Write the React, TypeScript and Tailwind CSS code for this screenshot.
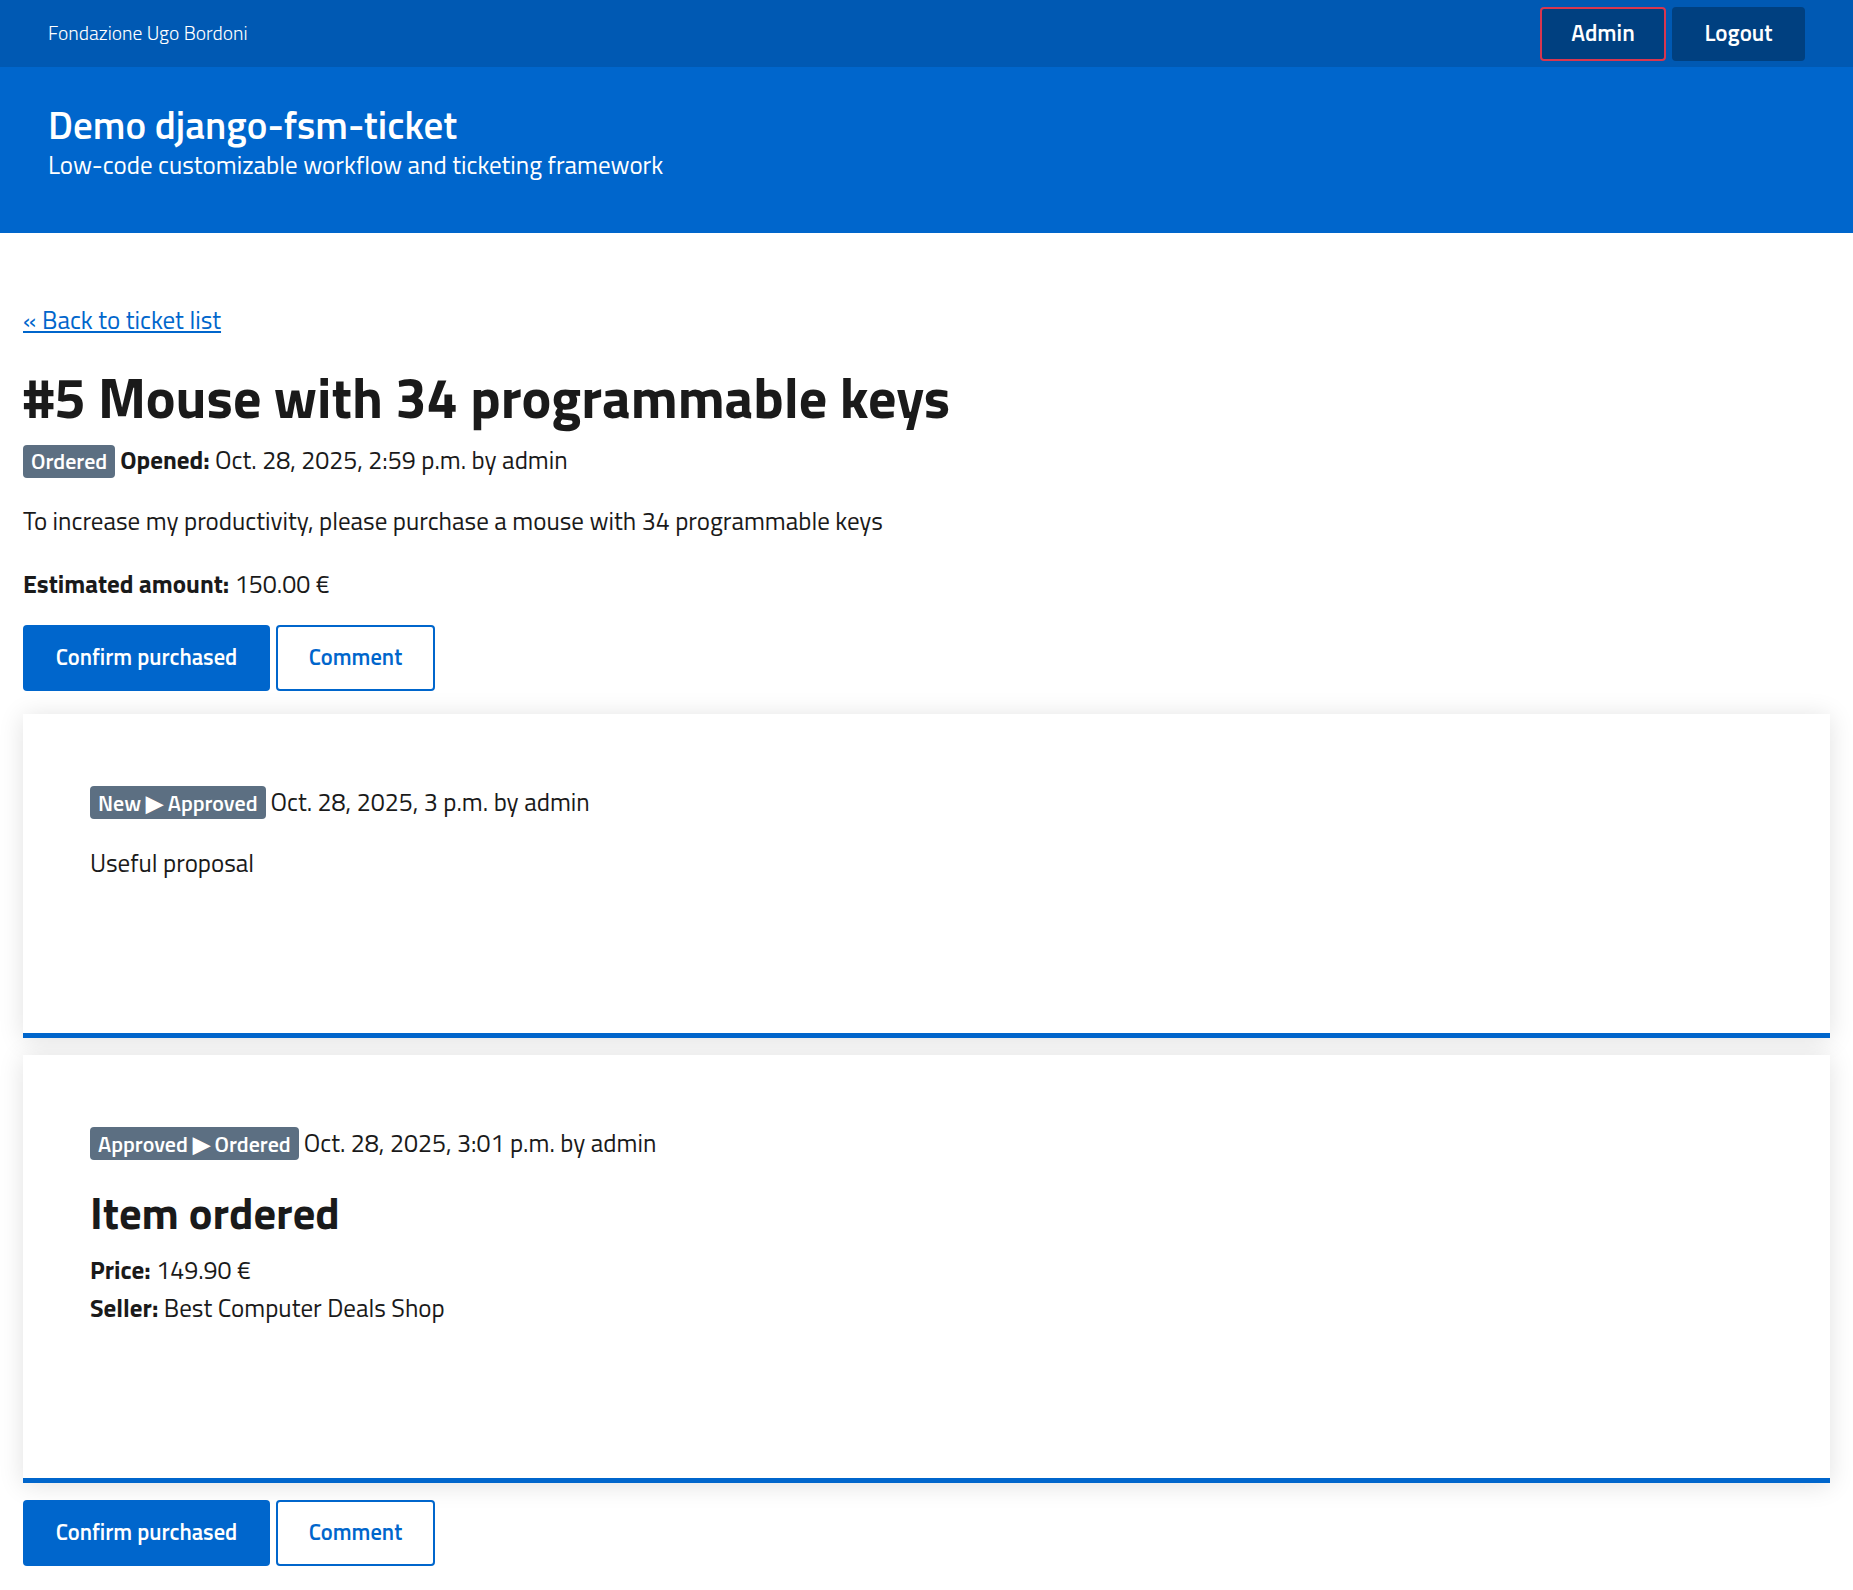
import React from "react";

const font = { fontFamily: '"Titillium Web", Roboto, "Liberation Sans", sans-serif' };

function Badge({ children }: { children: React.ReactNode }) {
  return (
    <span className="inline-flex items-center h-[33px] px-[8px] rounded-[4px] bg-[#5c6f82] text-white text-[22px] font-semibold leading-none">
      {children}
    </span>
  );
}

function Actions() {
  return (
    <div className="flex gap-[6px]">
      <button className="h-[66px] w-[247px] rounded-[4px] bg-[#0066cc] text-white text-[22.5px] font-semibold">
        Confirm purchased
      </button>
      <button className="h-[66px] w-[159px] rounded-[4px] border-2 border-[#0066cc] bg-white text-[#0066cc] text-[22.5px] font-semibold">
        Comment
      </button>
    </div>
  );
}

export default function App() {
  return (
    <div style={font} className="min-h-[1590px] bg-white text-[#1a1a1a]">
      {/* slim header */}
      <div className="h-[67px] bg-[#0059b3] flex items-center justify-between pl-[48px] pr-[48px]">
        <span className="text-white text-[19.6px] font-light">Fondazione Ugo Bordoni</span>
        <div className="flex gap-[6px] items-center">
          <button className="h-[54px] w-[126px] rounded-[4px] bg-[#004080] border-2 border-[#d9364f] text-white text-[23px] font-semibold">
            Admin
          </button>
          <button className="h-[54px] w-[133px] rounded-[4px] bg-[#004080] text-white text-[23px] font-semibold">
            Logout
          </button>
        </div>
      </div>
      {/* center header */}
      <div className="h-[166px] bg-[#0066cc] pl-[48px] pt-[35px] text-white">
        <div className="text-[39px] font-semibold leading-[46px]">Demo django-fsm-ticket</div>
        <div className="text-[25px] leading-[32px] mt-[1px]">Low-code customizable workflow and ticketing framework</div>
      </div>

      <div className="px-[23px]">
        <div className="mt-[71px] h-[33px] leading-[33px] text-[25px]">
          <a href="#" className="text-[#0066cc] underline underline-offset-[2px]">« Back to ticket list</a>
        </div>
        <h1 className="mt-[31px] h-[60px] leading-[60px] text-[56px] font-bold">
          #5 Mouse with 34 programmable keys
        </h1>
        <div className="mt-[17px] flex items-center gap-[5px] h-[32px] text-[25px]">
          <Badge>Ordered</Badge>
          <span>
            <b className="font-bold">Opened:</b> Oct. 28, 2025, 2:59 p.m. by admin
          </span>
        </div>
        <p className="mt-[28px] h-[33px] leading-[33px] text-[25px]">
          To increase my productivity, please purchase a mouse with 34 programmable keys
        </p>
        <p className="mt-[30px] h-[33px] leading-[33px] text-[25px]">
          <b className="font-bold">Estimated amount:</b> 150.00 €
        </p>
        <div className="mt-[24px]">
          <Actions />
        </div>

        <div className="mt-[23px] bg-white border-b-[5px] border-[#0066cc] shadow-[0_2px_24px_rgba(0,0,0,0.12)] pt-[72px] px-[67px] pb-[153px]">
          <div className="flex items-center gap-[5px] h-[33px] text-[25px]">
            <Badge>New ▶ Approved</Badge>
            <span>Oct. 28, 2025, 3 p.m. by admin</span>
          </div>
          <p className="mt-[28px] h-[33px] leading-[33px] text-[25px]">Useful proposal</p>
        </div>

        <div className="mt-[17px] bg-white border-b-[5px] border-[#0066cc] shadow-[0_2px_24px_rgba(0,0,0,0.12)] pt-[72px] px-[67px] pb-[151px]">
          <div className="flex items-center gap-[5px] h-[33px] text-[25px]">
            <Badge>Approved ▶ Ordered</Badge>
            <span>Oct. 28, 2025, 3:01 p.m. by admin</span>
          </div>
          <h3 className="mt-[27px] h-[52px] leading-[52px] text-[44.5px] font-bold">Item ordered</h3>
          <p className="mt-[12px] leading-[38px] text-[25px]">
            <b className="font-bold">Price:</b> 149.90 €
          </p>
          <p className="leading-[38px] text-[25px]">
            <b className="font-bold">Seller:</b> Best Computer Deals Shop
          </p>
        </div>

        <div className="mt-[17px] pb-[23px]">
          <Actions />
        </div>
      </div>
    </div>
  );
}
